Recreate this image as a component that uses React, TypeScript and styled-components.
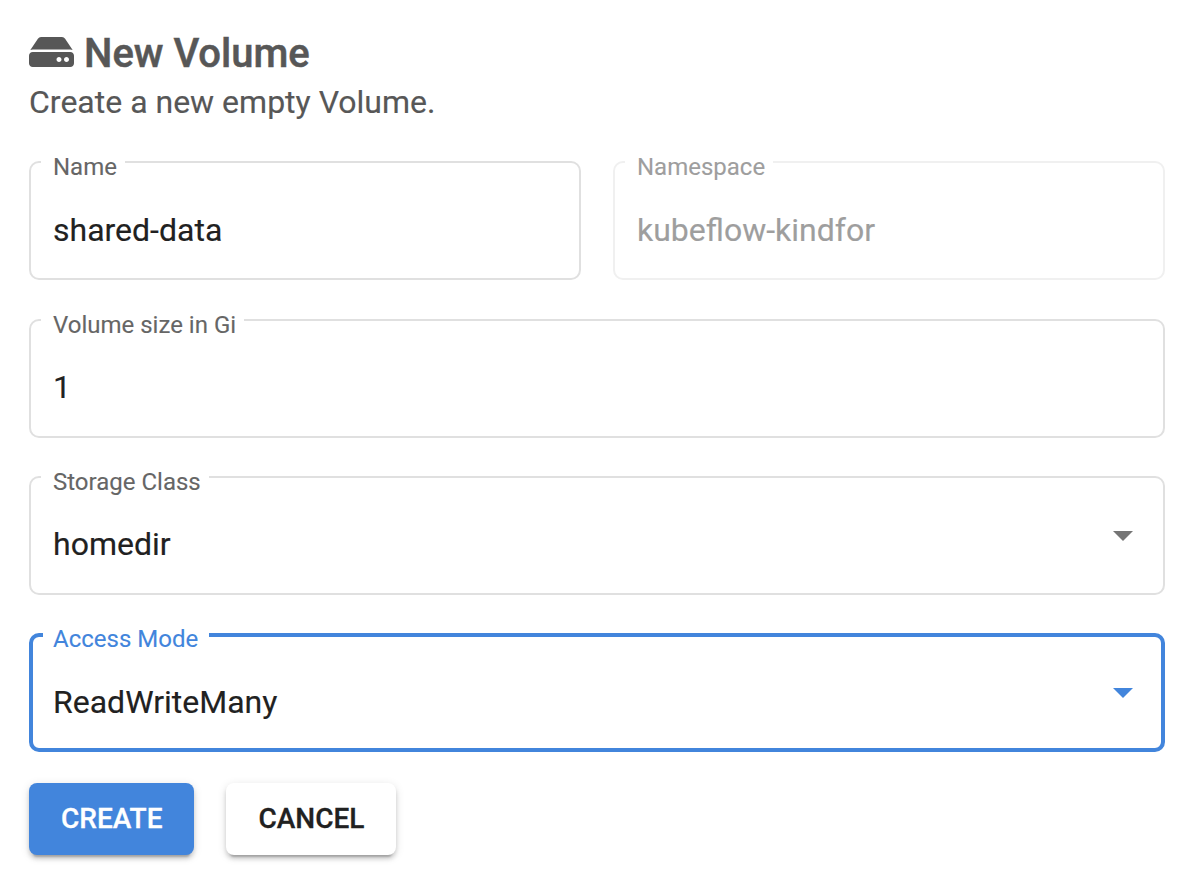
import React from 'react';
import styled, { createGlobalStyle, css } from 'styled-components';
import { FaHdd } from 'react-icons/fa';

const GlobalStyle = createGlobalStyle`
  *, *::before, *::after { box-sizing: border-box; }
  body {
    margin: 0;
    background: #fff;
    font-family: Roboto, "Liberation Sans", sans-serif;
    -webkit-font-smoothing: antialiased;
  }
`;

const Page = styled.main`
  width: 1192px;
  height: 884px;
  padding: 28px 27px 0 29px;
  overflow: hidden;
`;

const Title = styled.h1`
  display: flex;
  align-items: center;
  gap: 10px;
  height: 48px;
  margin: 0;
  color: #575757;
  font-size: 40px;
  font-weight: 500;
  line-height: 48px;
  white-space: nowrap;

  svg {
    width: 45px;
    height: 40px;
  }
`;

const TitleText = styled.span`
  padding-top: 4px;
  -webkit-text-stroke: 0.5px currentColor;
`;

const Subtitle = styled.p`
  height: 48px;
  margin: 2px 0 35.3px;
  color: #575757;
  font-size: 32px;
  line-height: 48px;
  white-space: nowrap;
  -webkit-text-stroke: 0.15px currentColor;
`;

const Form = styled.form`
  display: flex;
  flex-direction: column;
`;

const Fields = styled.div`
  display: flex;
  flex-direction: column;
  gap: 38.3px;
`;

const FieldRow = styled.div`
  display: grid;
  grid-template-columns: 1fr 1fr;
  gap: 32px;
`;

type FieldState = 'normal' | 'disabled' | 'focused';

const borders = {
  normal: '2px solid #e0e0e0',
  disabled: '2px solid #f0f0f0',
  focused: '4px solid #4285dc',
};
const labelColors = { normal: '#666', disabled: '#9e9e9e', focused: '#4285dc' };

const FieldBox = styled.div<{ $state: FieldState }>`
  position: relative;
  display: flex;
  align-items: center;
  justify-content: space-between;
  height: 119px;
  padding: ${p => (p.$state === 'focused' ? '0 28px 0 20px' : '0 30px 0 22px')};
  border: ${p => borders[p.$state]};
  border-radius: 10px;
`;

const Label = styled.span<{ $state: FieldState }>`
  position: absolute;
  top: -10px;
  left: 10px;
  padding: 0 8px 0 12px;
  background: #fff;
  color: ${p => labelColors[p.$state]};
  font-size: 24px;
  line-height: 28px;
  white-space: nowrap;
  -webkit-text-stroke: 0.1px currentColor;
  ${p => p.$state === 'focused' && css`
    top: -12px;
    padding: 0 11px 0 10px;
  `}
`;

const Value = styled.span<{ $state: FieldState }>`
  padding-top: 18px;
  color: ${p => (p.$state === 'disabled' ? '#9e9e9e' : '#212121')};
  font-size: 32px;
  line-height: 36px;
  -webkit-text-stroke: 0.15px currentColor;
`;

const Arrow = styled.span<{ $state: FieldState }>`
  margin-top: ${p => (p.$state === 'focused' ? 0 : '1px')};
  border: 10px solid transparent;
  border-top-color: ${p => (p.$state === 'focused' ? '#4285dc' : '#757575')};
  border-bottom: 0;
`;

const Actions = styled.div`
  display: flex;
  gap: 32px;
  margin-top: 30.8px;
`;

const Button = styled.button<{ $primary?: boolean }>`
  height: 72px;
  padding: 0 32px;
  border: 0;
  border-radius: 8px;
  background: ${p => (p.$primary ? '#4285dc' : '#fff')};
  color: ${p => (p.$primary ? '#fff' : '#212121')};
  font: 500 28px/72px Roboto, "Liberation Sans", sans-serif;
  -webkit-text-stroke: 0.3px currentColor;
  box-shadow: 0 6px 2px -4px rgba(0, 0, 0, 0.2), 0 4px 4px rgba(0, 0, 0, 0.14),
    0 2px 10px rgba(0, 0, 0, 0.12);
`;

interface FieldProps {
  label: string;
  value: string;
  state?: FieldState;
  select?: boolean;
}

const Field = ({ label, value, state = 'normal', select }: FieldProps) => (
  <FieldBox $state={state}>
    <Label $state={state}>{label}</Label>
    <Value $state={state}>{value}</Value>
    {select && <Arrow $state={state} />}
  </FieldBox>
);

export default function App() {
  return (
    <Page>
      <GlobalStyle />
      <Title>
        <FaHdd />
        <TitleText>New Volume</TitleText>
      </Title>
      <Subtitle>Create a new empty Volume.</Subtitle>
      <Form>
        <Fields>
          <FieldRow>
            <Field label="Name" value="shared-data" />
            <Field label="Namespace" value="kubeflow-kindfor" state="disabled" />
          </FieldRow>
          <Field label="Volume size in Gi" value="1" />
          <Field label="Storage Class" value="homedir" select />
          <Field label="Access Mode" value="ReadWriteMany" state="focused" select />
        </Fields>
        <Actions>
          <Button type="button" $primary>CREATE</Button>
          <Button type="button">CANCEL</Button>
        </Actions>
      </Form>
    </Page>
  );
}
